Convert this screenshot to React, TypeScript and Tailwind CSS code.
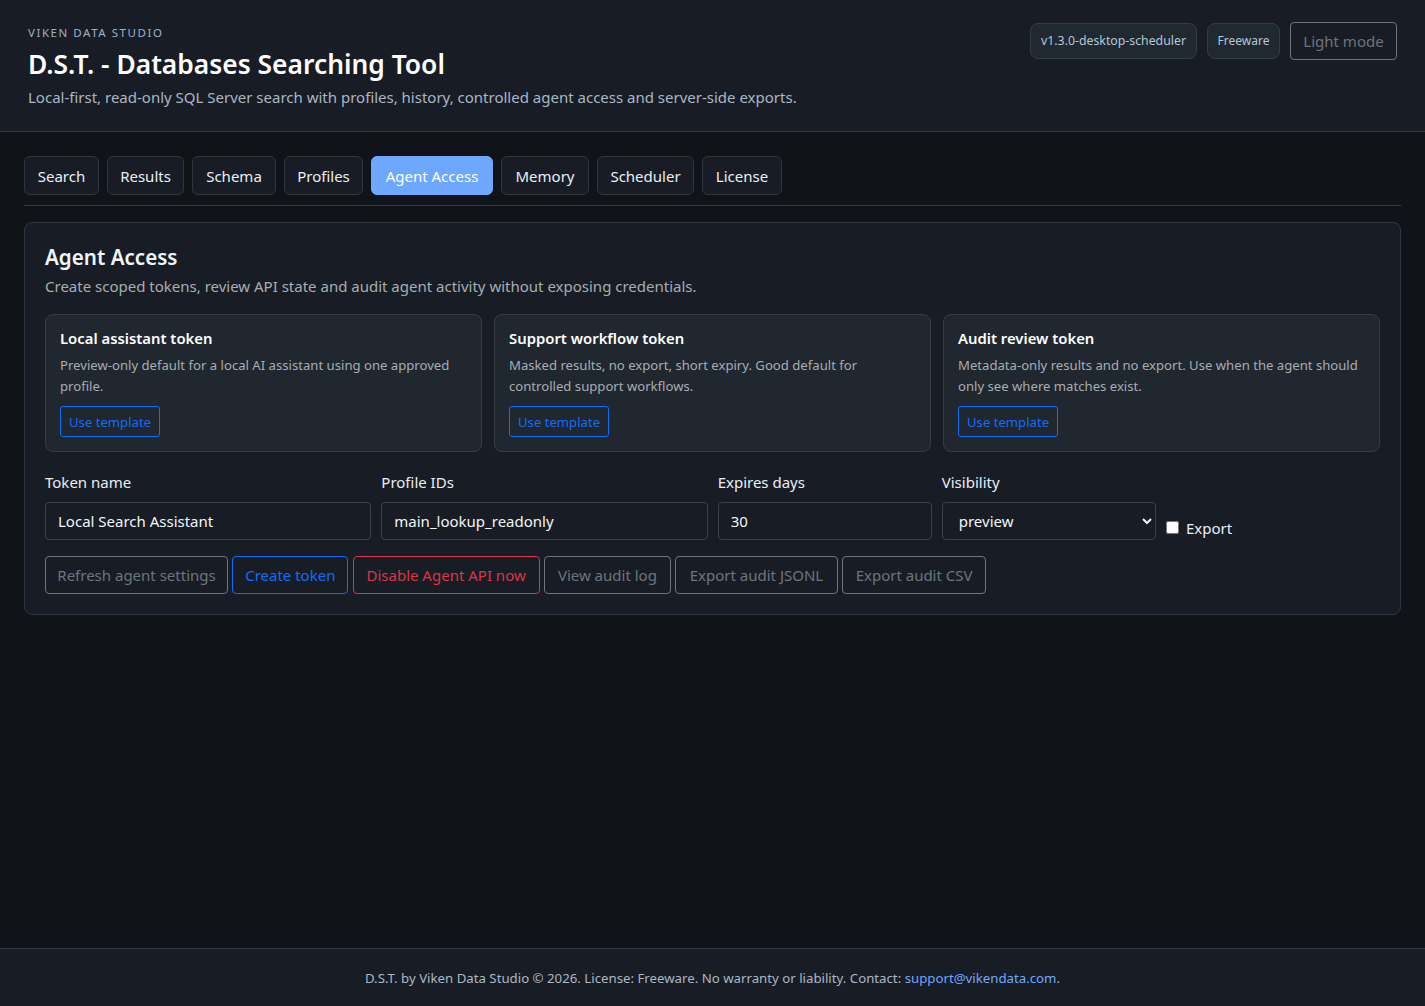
const tabs = [
  { label: "Search", width: "w-[75px]" },
  { label: "Results", width: "w-[77px]" },
  { label: "Schema", width: "w-[84px]" },
  { label: "Profiles", width: "w-[79px]" },
  { label: "Agent Access", width: "w-[122px]" },
  { label: "Memory", width: "w-[88px]" },
  { label: "Scheduler", width: "w-[97px]" },
  { label: "License", width: "w-[80px]" },
];
const templates = [
  { title: "Local assistant token", text: "Preview-only default for a local AI assistant using one approved profile." },
  { title: "Support workflow token", text: "Masked results, no export, short expiry. Good default for controlled support workflows." },
  { title: "Audit review token", text: "Metadata-only results and no export. Use when the agent should only see where matches exist." },
];
const fields = [
  { label: "Token name", value: "Local Search Assistant" },
  { label: "Profile IDs", value: "main_lookup_readonly" },
  { label: "Expires days", value: "30" },
];
const grayBtn = "h-[38px] rounded-[4px] border border-[#6c757d] text-[#6c757d] whitespace-nowrap";

export default function App() {
  return (
    <div className="flex min-h-[1006px] flex-col bg-[#101418] text-[15px] leading-[24px] text-[#e9eef5] [font-family:'Noto_Sans','Open_Sans',sans-serif]">
      <header className="flex h-[132px] items-start justify-between border-b border-[#343a42] bg-[#181d25] pl-[28px] pr-[28px] pt-[22px]">
        <div>
          <div className="mt-[1px] text-[11.5px] leading-[20px] tracking-[1.55px] text-[#9fb0c3]">VIKEN DATA STUDIO</div>
          <h1 className="text-[26.4px] font-semibold leading-[42px] text-white">D.S.T. - Databases Searching Tool</h1>
          <p className="leading-[24px] text-[#a9b7c6]">Local-first, read-only SQL Server search with profiles, history, controlled agent access and server-side exports.</p>
        </div>
        <div className="flex items-center gap-[10px]">
          <span className="flex h-[36px] w-[167px] items-center justify-center rounded-[8px] border border-[#343d47] bg-[#212930] text-[12.3px] text-[#b6c6d8]">v1.3.0-desktop-scheduler</span>
          <span className="flex h-[36px] w-[73px] items-center justify-center rounded-[8px] border border-[#343d47] bg-[#212930] text-[12px] text-[#b6c6d8]">Freeware</span>
          <button className={`${grayBtn} w-[107px]`}>Light mode</button>
        </div>
      </header>

      <main className="flex-1 px-[24px] pt-[24px]">
        <nav className="flex gap-[8px] border-b border-[#343a42] pb-[10px]">
          {tabs.map((t) =>
            t.label === "Agent Access" ? (
              <button key={t.label} className={`h-[39px] rounded-[6px] border border-[#6ea8fe] bg-[#6ea8fe] text-white ${t.width}`}>{t.label}</button>
            ) : (
              <button key={t.label} className={`h-[39px] rounded-[6px] border border-[#2f3640] bg-[#181d25] text-[#e9eef5] ${t.width}`}>{t.label}</button>
            )
          )}
        </nav>

        <section className="mt-[16px] rounded-[8px] border border-[#2f3640] bg-[#181d25] p-[20px]">
          <h2 className="-mt-[1px] text-[20.6px] font-semibold leading-[30px] text-[#f1f5f9]">Agent Access</h2>
          <p className="mt-[2px] text-[#a7adb4]">Create scoped tokens, review API state and audit agent activity without exposing credentials.</p>

          <div className="mt-[16px] grid grid-cols-3 gap-[12px]">
            {templates.map((c) => (
              <div key={c.title} className="h-[138px] rounded-[8px] border border-[#343d47] bg-[#20272f] px-[14px] pt-[11px]">
                <div className="text-[14.85px] font-semibold leading-[24px] text-white">{c.title}</div>
                <p className="mt-[5px] text-[13.13px] leading-[21px] text-[#a7adb4]">{c.text}</p>
                <button className="mt-[9px] h-[31px] rounded-[3px] border border-[#0d6efd] px-[8px] text-[13.13px] text-[#0d6efd]">Use template</button>
              </div>
            ))}
          </div>

          <div className="mt-[18px] grid grid-cols-[1.524fr_1.524fr_1fr_1fr_1fr] gap-[10px]">
            {fields.map((f) => (
              <label key={f.label} className="flex flex-col">
                <span className="mb-[8px] leading-[24px] text-[#e9eef5]">{f.label}</span>
                <input readOnly value={f.value} className="h-[38px] w-full rounded-[4px] border border-[#3a424c] bg-[#181d25] px-[12px] text-[#f1f5f9] outline-none" />
              </label>
            ))}
            <label className="flex flex-col">
              <span className="mb-[8px] leading-[24px] text-[#e9eef5]">Visibility</span>
              <select defaultValue="preview" className="h-[38px] w-full rounded-[4px] border border-[#3a424c] bg-[#181d25] px-[12px] text-[#f1f5f9] outline-none">
                <option value="preview">preview</option>
              </select>
            </label>
            <label className="flex h-[38px] translate-y-[7px] items-center gap-[7px] self-end">
              <input type="checkbox" className="mb-[2px] h-[13px] w-[13px]" />
              <span>Export</span>
            </label>
          </div>

          <div className="mt-[16px] flex gap-[4.3px]">
            <button className={`${grayBtn} w-[183px]`}>Refresh agent settings</button>
            <button className="h-[38px] w-[116px] rounded-[4px] border border-[#0d6efd] text-[#0d6efd]">Create token</button>
            <button className="h-[38px] w-[187px] rounded-[4px] border border-[#dc3545] text-[#dc3545]">Disable Agent API now</button>
            <button className={`${grayBtn} w-[127px]`}>View audit log</button>
            <button className={`${grayBtn} w-[162.6px]`}>Export audit JSONL</button>
            <button className={`${grayBtn} w-[144px]`}>Export audit CSV</button>
          </div>
        </section>
      </main>

      <footer className="flex h-[58px] items-center justify-center border-t border-[#343a42] bg-[#181d25] text-[13.24px] text-[#a9b7c6]">
        <span>D.S.T. by Viken Data Studio © 2026. License: Freeware. No warranty or liability. Contact: <a className="text-[#6ea8fe]">support@vikendata.com</a>.</span>
      </footer>
    </div>
  );
}
